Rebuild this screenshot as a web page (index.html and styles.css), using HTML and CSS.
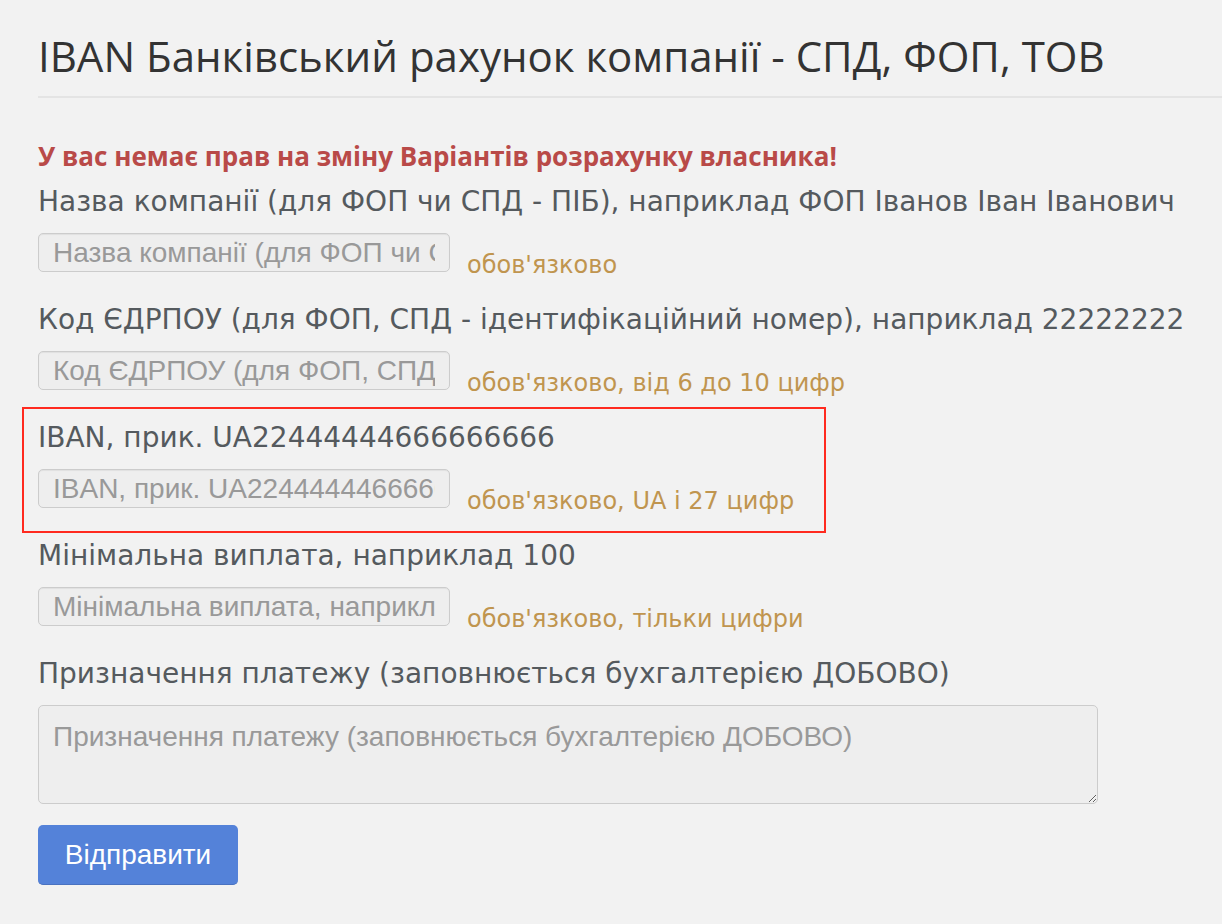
FILE: index.html
```html
<!DOCTYPE html>
<html lang="uk">
<head>
<meta charset="utf-8">
<title>IBAN Банківський рахунок компанії</title>
<link rel="stylesheet" href="styles.css">
</head>
<body>
<div class="page">
  <div class="page-header">
    <h1>IBAN Банківський рахунок компанії - СПД, ФОП, ТОВ</h1>
  </div>
  <form class="form">
    <p class="error">У вас немає прав на зміну Варіантів розрахунку власника!</p>

    <div class="group">
      <label class="label">Назва компанії (для ФОП чи СПД - ПІБ), наприклад ФОП Іванов Іван Іванович</label>
      <div class="row">
        <input class="input" type="text" disabled placeholder="Назва компанії (для ФОП чи СПД - ПІБ), наприклад ФОП Іванов Іван Іванович">
        <span class="help">обов'язково</span>
      </div>
    </div>

    <div class="group">
      <label class="label">Код ЄДРПОУ (для ФОП, СПД - ідентифікаційний номер), наприклад 22222222</label>
      <div class="row">
        <input class="input" type="text" disabled placeholder="Код ЄДРПОУ (для ФОП, СПД - ідентифікаційний номер), наприклад 22222222">
        <span class="help">обов'язково, від 6 до 10 цифр</span>
      </div>
    </div>

    <div class="group highlight">
      <label class="label">IBAN, прик. UA22444444666666666</label>
      <div class="row">
        <input class="input" type="text" disabled placeholder="IBAN, прик. UA22444444666666666">
        <span class="help">обов'язково, UA і 27 цифр</span>
      </div>
    </div>

    <div class="group">
      <label class="label">Мінімальна виплата, наприклад 100</label>
      <div class="row">
        <input class="input" type="text" disabled placeholder="Мінімальна виплата, наприклад 100">
        <span class="help">обов'язково, тільки цифри</span>
      </div>
    </div>

    <div class="group last">
      <label class="label">Призначення платежу (заповнюється бухгалтерією ДОБОВО)</label>
      <textarea class="textarea" disabled placeholder="Призначення платежу (заповнюється бухгалтерією ДОБОВО)"></textarea>
    </div>

    <button class="btn" type="button">Відправити</button>
  </form>
</div>
</body>
</html>
```
FILE: styles.css
```css
html, body {
  margin: 0;
  padding: 0;
  background: #f2f2f2;
}

.page {
  padding-left: 38px;
  padding-top: 28px;
}

.page-header {
  border-bottom: 2px solid #e4e4e4;
  padding-bottom: 12px;
}

h1 {
  margin: 0;
  font-family: "Open Sans", "Noto Sans", sans-serif;
  font-weight: 400;
  font-size: 42px;
  line-height: 56px;
  color: #333333;
}

.form {
  padding-top: 40px;
}

.error {
  margin: 0 0 11px 0;
  font-family: "Open Sans", "Noto Sans", sans-serif;
  font-weight: 700;
  font-size: 26px;
  line-height: 36px;
  color: #b94a48;
}

.group {
  position: relative;
  width: 1184px;
}

.label {
  display: block;
  font-family: "DejaVu Sans", "Liberation Sans", sans-serif;
  font-size: 28px;
  line-height: 34px;
  color: #555a5e;
  margin-bottom: 14px;
}

.row {
  display: flex;
  align-items: flex-end;
  gap: 17px;
  height: 39px;
  margin-bottom: 31px;
}

.input {
  box-sizing: border-box;
  width: 412px;
  height: 39px;
  margin: 0;
  padding: 0 14px;
  border: 1px solid #cccccc;
  border-radius: 5px;
  background: #eeeeee;
  font-family: "Liberation Sans", Arial, sans-serif;
  font-size: 28px;
  color: #999999;
  box-shadow: inset 0 1px 1px rgba(0,0,0,0.06);
}

.input::placeholder,
.textarea::placeholder {
  color: #999999;
  opacity: 1;
}

.help {
  font-family: "DejaVu Sans", "Liberation Sans", sans-serif;
  font-size: 24px;
  line-height: 24px;
  color: #c0954f;
  margin-bottom: -5px;
}

.highlight::after {
  content: "";
  position: absolute;
  left: -16px;
  top: -14px;
  box-sizing: border-box;
  width: 804px;
  height: 126px;
  border: 2px solid #ff2a1f;
  pointer-events: none;
}

.textarea {
  display: block;
  box-sizing: border-box;
  width: 1060px;
  height: 99px;
  margin: 0;
  padding: 15px 14px;
  border: 1px solid #cccccc;
  border-radius: 5px;
  background: #eeeeee;
  font-family: "Liberation Sans", Arial, sans-serif;
  font-size: 28px;
  line-height: 32px;
  color: #999999;
  resize: vertical;
}

.group.last {
  margin-bottom: 21px;
}

.btn {
  display: block;
  width: 200px;
  height: 60px;
  margin: 0;
  border: 0;
  border-radius: 5px;
  background: #5482d9;
  border-bottom: 1px solid #4a72c0;
  color: #ffffff;
  font-family: "Liberation Sans", Arial, sans-serif;
  font-size: 28px;
  cursor: pointer;
}
```
